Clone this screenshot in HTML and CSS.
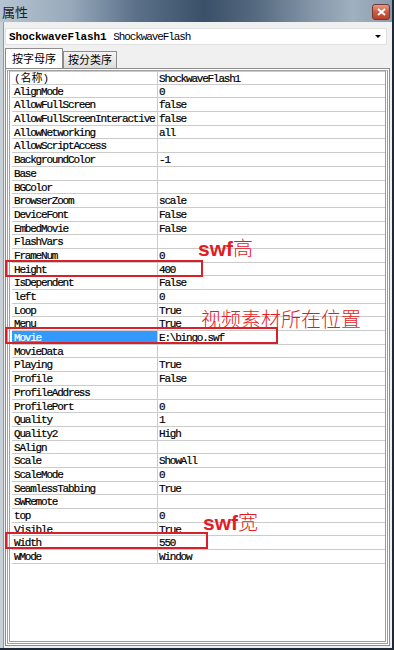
FILE: index.html
```html
<!DOCTYPE html>
<html lang="zh-CN">
<head>
  <meta charset="UTF-8">
  <meta name="viewport" content="width=device-width, initial-scale=1.0">
  <title>属性</title>
  <link rel="stylesheet" href="styles.css">
</head>
<body>
  <div class="window">
    <!-- Title bar -->
    <div class="titlebar">
      <span class="title">属性</span>
      <span class="close">
        <svg width="9" height="8" viewBox="0 0 9 8"><path d="M1 1 L8 7 M8 1 L1 7" stroke="#fff" stroke-width="2"/></svg>
      </span>
    </div>

    <div class="client">
      <!-- Object selector -->
      <div class="combo">
        <span class="combo-text"><b>ShockwaveFlash1</b> <span class="combo-type">ShockwaveFlash</span></span>
        <span class="combo-arrow"></span>
      </div>

      <!-- Tabs -->
      <div class="tabs">
        <div class="tab active">按字母序</div>
        <div class="tab">按分类序</div>
      </div>

      <!-- Property grid -->
      <div class="panel">
        <div class="grid">
          <div class="row"><div class="name cjk">(名称)</div><div class="value">ShockwaveFlash1</div></div>
          <div class="row"><div class="name">AlignMode</div><div class="value">0</div></div>
          <div class="row"><div class="name">AllowFullScreen</div><div class="value">false</div></div>
          <div class="row"><div class="name">AllowFullScreenInteractive</div><div class="value">false</div></div>
          <div class="row"><div class="name">AllowNetworking</div><div class="value">all</div></div>
          <div class="row"><div class="name">AllowScriptAccess</div><div class="value"></div></div>
          <div class="row"><div class="name">BackgroundColor</div><div class="value">-1</div></div>
          <div class="row"><div class="name">Base</div><div class="value"></div></div>
          <div class="row"><div class="name">BGColor</div><div class="value"></div></div>
          <div class="row"><div class="name">BrowserZoom</div><div class="value">scale</div></div>
          <div class="row"><div class="name">DeviceFont</div><div class="value">False</div></div>
          <div class="row"><div class="name">EmbedMovie</div><div class="value">False</div></div>
          <div class="row"><div class="name">FlashVars</div><div class="value"></div></div>
          <div class="row"><div class="name">FrameNum</div><div class="value">0</div></div>
          <div class="row"><div class="name">Height</div><div class="value">400</div></div>
          <div class="row"><div class="name">IsDependent</div><div class="value">False</div></div>
          <div class="row"><div class="name">left</div><div class="value">0</div></div>
          <div class="row"><div class="name">Loop</div><div class="value">True</div></div>
          <div class="row"><div class="name">Menu</div><div class="value">True</div></div>
          <div class="row"><div class="name selected">Movie</div><div class="value">E:\bingo.swf</div></div>
          <div class="row"><div class="name">MovieData</div><div class="value"></div></div>
          <div class="row"><div class="name">Playing</div><div class="value">True</div></div>
          <div class="row"><div class="name">Profile</div><div class="value">False</div></div>
          <div class="row"><div class="name">ProfileAddress</div><div class="value"></div></div>
          <div class="row"><div class="name">ProfilePort</div><div class="value">0</div></div>
          <div class="row"><div class="name">Quality</div><div class="value">1</div></div>
          <div class="row"><div class="name">Quality2</div><div class="value">High</div></div>
          <div class="row"><div class="name">SAlign</div><div class="value"></div></div>
          <div class="row"><div class="name">Scale</div><div class="value">ShowAll</div></div>
          <div class="row"><div class="name">ScaleMode</div><div class="value">0</div></div>
          <div class="row"><div class="name">SeamlessTabbing</div><div class="value">True</div></div>
          <div class="row"><div class="name">SWRemote</div><div class="value"></div></div>
          <div class="row"><div class="name">top</div><div class="value">0</div></div>
          <div class="row"><div class="name">Visible</div><div class="value">True</div></div>
          <div class="row"><div class="name">Width</div><div class="value">550</div></div>
          <div class="row"><div class="name">WMode</div><div class="value">Window</div></div>
        </div>
      </div>
    </div>

    <!-- Red annotations drawn over the screenshot -->
    <div class="mark mark-height"></div>
    <div class="mark mark-movie"></div>
    <div class="mark mark-width"></div>
    <div class="note note-height"><b>swf</b>高</div>
    <div class="note note-movie">视频素材所在位置</div>
    <div class="note note-width"><b>swf</b>宽</div>
  </div>
</body>
</html>
```

FILE: styles.css
```css
body {
  margin: 0;
  padding: 0;
  background: #f0f0f0;
  font-family: "Liberation Mono", "Noto Sans CJK SC", monospace;
}

.window {
  position: relative;
  width: 394px;
  height: 650px;
  box-sizing: border-box;
  display: flex;
  flex-direction: column;
  background: #f0f0f0;
  border-right: 2px solid #1d2936;
  border-bottom: 2px solid #1d2936;
  overflow: hidden;
}

/* Title bar */
.titlebar {
  height: 22px;
  flex: none;
  display: flex;
  align-items: center;
  justify-content: space-between;
  padding: 0 0 0 2px;
  background: linear-gradient(to right, #b6c4d1 0%, #97a9ba 18%, #5a7088 35%, #3a5068 52%, #55697f 65%, #8597a9 80%, #9fb0bf 90%, #8a9bad 100%);
}

.title {
  font-family: "Noto Sans CJK SC", sans-serif;
  font-size: 13px;
  color: #1c1c1c;
  line-height: 1;
}

.close {
  width: 18px;
  height: 16px;
  margin-right: 2px;
  margin-top: 1px;
  border: 1px solid #6e3a33;
  border-radius: 3px;
  box-sizing: border-box;
  display: flex;
  align-items: center;
  justify-content: center;
  background: linear-gradient(#e59b87, #cf5a41 50%, #b8412c);
}

/* Client area */
.client {
  flex: 1;
  display: flex;
  flex-direction: column;
  padding: 6px 2px 2px 5px;
  border-left: 3px solid #c8d0d8;
  box-shadow: inset 1px 0 0 #8e98a3;
  min-height: 0;
}

.combo {
  height: 17px;
  margin-left: -3px;
  width: 382px;
  box-sizing: border-box;
  border: 1px solid #e0e0e0;
  background: #fff;
  display: flex;
  align-items: center;
  justify-content: space-between;
  padding: 0 5px 0 3px;
}

.combo-text {
  font-size: 11px;
  white-space: nowrap;
  color: #000;
}

.combo-text b {
  letter-spacing: -0.1px;
}

.combo-type {
  letter-spacing: -1.1px;
}

.combo-arrow {
  width: 0;
  height: 0;
  border-left: 3px solid transparent;
  border-right: 3px solid transparent;
  border-top: 3px solid #000;
}

.tabs {
  height: 21px;
  display: flex;
  align-items: flex-end;
  margin-left: -3px;
  margin-top: 2px;
}

.tab {
  font-family: "Noto Sans CJK SC", sans-serif;
  font-size: 11px;
  line-height: 15px;
  height: 16px;
  padding: 0 4px;
  border: 1px solid #8c8c8c;
  border-bottom: none;
  background: linear-gradient(#f4f4f4, #dcdcdc);
  color: #000;
  margin-left: 1px;
}

.tab.active {
  height: 19px;
  line-height: 18px;
  padding: 0 6px;
  background: #fff;
  margin-left: 0;
  margin-right: -1px;
  position: relative;
  z-index: 1;
}

.panel {
  flex: 1;
  margin-left: -3px;
  width: 385px;
  box-sizing: border-box;
  border: 1px solid #8c8c8c;
  background: #fff;
  padding: 1px;
  display: flex;
  min-height: 0;
}

.grid {
  flex: 1;
  border: 1px solid #a0a0a0;
  border-right: 3px double #9c9c9c;
  border-bottom: 3px double #9c9c9c;
  box-shadow: inset 0 1px 0 #cfcfcf;
  padding: 0 0 0 2px;
  border-left: 3px double #a0a0a0;
}

.row {
  display: flex;
  height: 13.7px;
  box-sizing: border-box;
  border-bottom: 1px solid #cbcbcb;
  font-size: 11px;
  line-height: 14px;
  letter-spacing: -1.2px;
  color: #000;
  -webkit-text-stroke: 0.2px #000;
}

.row:first-child {
  border-top: 1px solid #cbcbcb;
}

.name {
  width: 146px;
  flex: none;
  box-sizing: border-box;
  padding-left: 2px;
  border-right: 1px solid #cbcbcb;
  white-space: nowrap;
  overflow: hidden;
}

.name.cjk {
  letter-spacing: 0;
  -webkit-text-stroke: 0;
}

.name.selected {
  background: #3399ff;
  color: #fff;
  -webkit-text-stroke: 0.2px #fff;
}

.value {
  flex: 1;
  padding-left: 1px;
  white-space: nowrap;
}

/* Annotations */
.mark {
  position: absolute;
  border: 2px solid #d8202a;
  box-sizing: border-box;
}

.mark-height { left: 5px; top: 260px; width: 198px; height: 17px; }
.mark-movie { left: 5px; top: 327px; width: 273px; height: 17px; }
.mark-width { left: 5px; top: 532px; width: 203px; height: 17px; }

.note {
  position: absolute;
  color: #e41b23;
  font-family: "Noto Sans CJK SC", sans-serif;
  font-size: 20px;
  font-weight: 300;
  line-height: 1;
  white-space: nowrap;
}

.note b {
  font-family: "Liberation Sans", sans-serif;
  font-size: 21px;
  font-weight: bold;
}

.note-height { left: 198px; top: 238px; }
.note-movie { left: 201px; top: 309px; }
.note-width { left: 203px; top: 512px; }
```
